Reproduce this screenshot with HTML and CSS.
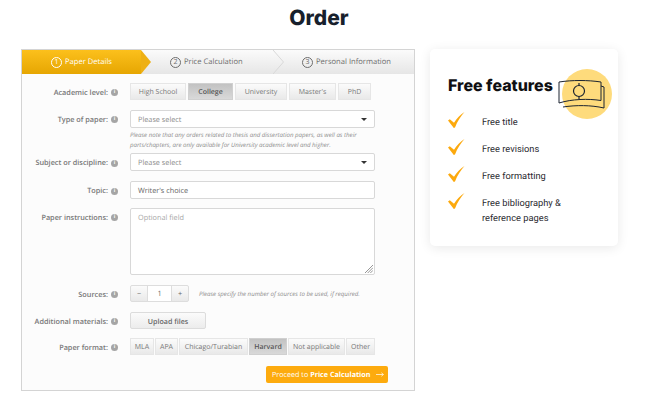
FILE: index.html
```html
<!DOCTYPE html>
<html lang="en">
<head>
<meta charset="utf-8">
<title>Order</title>
<link rel="stylesheet" href="styles.css">
</head>
<body>
<h1 class="title">Order</h1>
<div class="layout">
  <main class="order">
    <div class="steps">
      <div class="step step-active"><span class="num">1</span>Paper Details</div>
      <div class="step step-two"><span class="num">2</span>Price Calculation</div>
      <div class="step step-three"><span class="num">3</span>Personal Information</div>
      <svg class="arrow arrow-one" viewBox="0 0 10 24" aria-hidden="true"><path d="M0 0L10 12L0 24Z" fill="#eeb014"/></svg>
      <svg class="arrow arrow-two" viewBox="0 0 12 24" aria-hidden="true"><path d="M0 0L10.500 12L0 24" fill="none" stroke="#d8d8d8"/></svg>
    </div>
    <div class="form">
      <div class="row">
        <div class="label">Academic level:<i class="info">i</i></div>
        <div class="tabs tabs-wide">
          <span class="tab tab-hs">High School</span><span class="tab tab-college on">College</span><span class="tab tab-uni">University</span><span class="tab tab-master">Master's</span><span class="tab tab-phd">PhD</span>
        </div>
      </div>
      <div class="row row-select">
        <div class="label">Type of paper:<i class="info">i</i></div>
        <div class="control">
          <div class="field select">Please select<b class="caret"></b></div>
          <p class="note">Please note that any orders related to thesis and dissertation papers, as well as their<br>parts/chapters, are only available for University academic level and higher.</p>
        </div>
      </div>
      <div class="row">
        <div class="label">Subject or discipline:<i class="info">i</i></div>
        <div class="field select">Please select<b class="caret"></b></div>
      </div>
      <div class="row row-topic">
        <div class="label">Topic:<i class="info">i</i></div>
        <div class="field value">Writer's choice</div>
      </div>
      <div class="row row-top">
        <div class="label">Paper instructions:<i class="info">i</i></div>
        <div class="field area">Optional field
          <svg class="grip" viewBox="0 0 9 9" aria-hidden="true"><path d="M0 9L9 0M3 9L9 3M6 9L9 6" stroke="#888" fill="none"/></svg>
        </div>
      </div>
      <div class="row">
        <div class="label">Sources:<i class="info">i</i></div>
        <div class="stepper"><span class="minus">−</span><span class="count">1</span><span class="plus">+</span></div>
        <p class="note note-inline">Please specify the number of sources to be used, if required.</p>
      </div>
      <div class="row row-upload">
        <div class="label">Additional materials:<i class="info">i</i></div>
        <div class="upload">Upload files</div>
      </div>
      <div class="row row-format">
        <div class="label">Paper format:<i class="info">i</i></div>
        <div class="tabs">
          <span class="tab tab-mla">MLA</span><span class="tab tab-apa">APA</span><span class="tab tab-chi">Chicago/Turabian</span><span class="tab tab-har on">Harvard</span><span class="tab tab-na">Not applicable</span><span class="tab tab-oth">Other</span>
        </div>
      </div>
      <div class="actions">
        <div class="proceed">Proceed to&nbsp;<strong>Price Calculation</strong><svg class="long-arrow" viewBox="0 0 9 5" aria-hidden="true"><path d="M0 2.500H8M6 .5L8.500 2.500L6 4.500" fill="none" stroke="#fff" stroke-width=".8"/></svg></div>
      </div>
    </div>
  </main>
  <aside class="card">
    <div class="card-head">
      <h2>Free features</h2>
      <svg class="money" viewBox="0 0 56 52" aria-hidden="true">
        <circle cx="30" cy="25" r="25" fill="#fedb7c"/>
        <path d="M2 13C15 11 31 11 44 13L44 31.500C31 29.500 15 30 2 34Z" fill="none" stroke="#1c2430" stroke-width="1"/>
        <path d="M6 38C19 36 34 36 47 39L47 18L44 17" fill="none" stroke="#1c2430" stroke-width="1"/>
        <circle cx="22" cy="22" r="5.500" fill="none" stroke="#1c2430" stroke-width="1.200"/>
        <path d="M22 14V16.500M22 27.500V30" stroke="#1c2430" stroke-width="1.200"/>
      </svg>
    </div>
    <ul class="features">
      <li><svg class="check" viewBox="0 0 17 16" aria-hidden="true"><path d="M0 8.500L1.800 7.300L6 10.800C9 6 12 3 16.500 0C13 4 9.200 9.500 7 15.500L5.800 16Z" fill="#fca90d"/></svg><span>Free title</span></li>
      <li><svg class="check" viewBox="0 0 17 16" aria-hidden="true"><path d="M0 8.500L1.800 7.300L6 10.800C9 6 12 3 16.500 0C13 4 9.200 9.500 7 15.500L5.800 16Z" fill="#fca90d"/></svg><span>Free revisions</span></li>
      <li><svg class="check" viewBox="0 0 17 16" aria-hidden="true"><path d="M0 8.500L1.800 7.300L6 10.800C9 6 12 3 16.500 0C13 4 9.200 9.500 7 15.500L5.800 16Z" fill="#fca90d"/></svg><span>Free formatting</span></li>
      <li><svg class="check" viewBox="0 0 17 16" aria-hidden="true"><path d="M0 8.500L1.800 7.300L6 10.800C9 6 12 3 16.500 0C13 4 9.200 9.500 7 15.500L5.800 16Z" fill="#fca90d"/></svg><span>Free bibliography &amp;<br>reference pages</span></li>
    </ul>
  </aside>
</div>
</body>
</html>
```
FILE: styles.css
```css
* { box-sizing: border-box; }
html, body { margin: 0; padding: 0; }
body {
  width: 650px;
  height: 415px;
  overflow: hidden;
  background: #fff;
  font-family: "Open Sans", sans-serif;
  text-rendering: geometricPrecision;
  color: #666;
}
.title {
  margin: 0;
  padding-top: 5px;
  height: 49px;
  width: 638px;
  text-align: center;
  font-family: Inter, sans-serif;
  font-weight: 800;
  font-size: 21px;
  line-height: 27px;
  color: #17202c;
}
.layout {
  display: flex;
  align-items: flex-start;
  padding-left: 21px;
  gap: 15px;
}
.order {
  width: 394px;
  height: 342px;
  border: 1px solid #d4d4d4;
  border-top: 0;
  background: #fcfcfc;
}
.steps {
  position: relative;
  display: flex;
  height: 25px;
  background: linear-gradient(#fbfbfb, #e6e6e6);
  border-top: 1px solid #d4d4d4;
  font-size: 7.600px;
  color: #6d6d6d;
  white-space: nowrap;
}
.step {
  display: flex;
  align-items: center;
  height: 24px;
}
.step-active {
  width: 119px;
  padding-left: 29px;
  color: #fff;
  background: linear-gradient(#fcc01c, #e6a602);
}
.step-two { width: 132px; padding-left: 29px; }
.step-three { padding-left: 29px; }
.num {
  display: inline-flex;
  align-items: center;
  justify-content: center;
  width: 11px;
  height: 11px;
  margin-right: 3px;
  border: 1px solid currentColor;
  border-radius: 50%;
  font-size: 7px;
  line-height: 1;
}
.arrow {
  position: absolute;
  top: 0;
  height: 24px;
}
.arrow-one { left: 119px; width: 10px; }
.arrow-two { left: 251px; width: 12px; }
.form {
  padding-top: 9px;
}
.row {
  display: flex;
  align-items: center;
  min-height: 17px;
  margin-bottom: 10px;
}
.row-select { align-items: flex-start; margin-bottom: 4px; }
.row-topic { margin-bottom: 9px; }
.row-top { align-items: flex-start; }
.row-upload { margin-bottom: 9px; }
.row-format { margin-bottom: 11px; }
.label {
  flex: none;
  display: flex;
  align-items: center;
  justify-content: flex-end;
  width: 96px;
  height: 17px;
  padding-top: 2px;
  margin-right: 12px;
  font-size: 7.300px;
  font-weight: 600;
  color: #777;
  white-space: nowrap;
}
.info {
  display: inline-flex;
  align-items: center;
  justify-content: center;
  flex: none;
  width: 7px;
  height: 7px;
  margin-left: 3px;
  border-radius: 50%;
  background: #a5a5a5;
  color: #fff;
  font: normal 700 5px/1 "Open Sans", sans-serif;
}
.tabs { display: flex; gap: 1px; }
.tabs-wide { gap: 2px; }
.tab {
  display: flex;
  align-items: center;
  justify-content: center;
  height: 17px;
  padding-top: 2px;
  border: 1px solid #e6e6e6;
  background: linear-gradient(#fbfbfb, #e9e9e9);
  font-size: 7px;
  color: #777;
  white-space: nowrap;
}
.tab.on {
  background: linear-gradient(#c2c2c2, #d9d9d9);
  font-weight: 600;
  color: #555;
  border-color: #d0d0d0;
}
.tab-hs { width: 56px; }
.tab-college { width: 45px; }
.tab-uni { width: 52px; }
.tab-master { width: 47px; }
.tab-phd { width: 33px; }
.tab-mla { width: 24px; }
.tab-apa { width: 23px; }
.tab-chi { width: 69px; }
.tab-har { width: 38px; }
.tab-na { width: 57px; }
.tab-oth { width: 29px; }
.control { width: 245px; }
.field {
  position: relative;
  display: flex;
  align-items: center;
  width: 245px;
  height: 18px;
  padding: 2px 0 0 7px;
  background: #fff;
  border: 1px solid #d8d8d8;
  border-radius: 2px;
  font-size: 7.300px;
  color: #8b8b8b;
}
.value { color: #666; }
.area {
  align-items: flex-start;
  height: 67px;
  padding-top: 4px;
  color: #a8a8a8;
}
.grip {
  position: absolute;
  right: 1px;
  bottom: 1px;
  width: 8px;
  height: 8px;
}
.caret {
  position: absolute;
  right: 7px;
  top: 7px;
  border-style: solid;
  border-width: 3px 3px 0;
  border-color: #333 transparent transparent;
}
.note {
  margin: 2px 0 0;
  font-size: 6.100px;
  line-height: 9.500px;
  font-style: italic;
  color: #8a8a8a;
  white-space: nowrap;
}
.note-inline { margin: 1px 0 0 10px; }
.stepper {
  display: flex;
  width: 59px;
  height: 17px;
  font-size: 7.300px;
  color: #666;
  border: 1px solid #ddd;
  border-radius: 2px;
  background: linear-gradient(#fbfbfb, #e9e9e9);
}
.stepper span {
  display: flex;
  align-items: center;
  justify-content: center;
  width: 16px;
  padding-top: 1px;
}
.stepper .count {
  width: 25px;
  background: #fff;
  border-left: 1px solid #ddd;
  border-right: 1px solid #ddd;
}
.upload {
  display: flex;
  align-items: center;
  justify-content: center;
  width: 76px;
  height: 17px;
  padding-top: 2px;
  border: 1px solid #dcdcdc;
  border-radius: 2px;
  background: linear-gradient(#fbfbfb, #ececec);
  font-size: 7.100px;
  font-weight: 600;
  color: #666;
}
.actions {
  display: flex;
  justify-content: flex-end;
  padding-right: 26px;
}
.proceed {
  display: flex;
  align-items: center;
  width: 122px;
  height: 17px;
  padding-left: 6px;
  border-radius: 2px;
  background: #fdab0e;
  color: #fff;
  font-size: 7.200px;
  white-space: nowrap;
}
.proceed strong { font-weight: 700; }
.long-arrow { width: 8px; height: 5px; margin-left: 6px; }
.card {
  width: 188px;
  height: 197px;
  padding: 19px 0 0 18px;
  background: #fff;
  border-radius: 5px;
  box-shadow: 0 2px 12px rgba(0, 0, 0, .09);
}
.card-head {
  display: flex;
  align-items: flex-start;
  height: 47px;
}
.card-head h2 {
  margin: 8px 0 0;
  width: 109px;
  font-family: Inter, sans-serif;
  font-weight: 800;
  font-size: 16px;
  line-height: 18px;
  color: #0f0f12;
  white-space: nowrap;
}
.money { width: 56px; height: 52px; flex: none; margin-top: 1px; }
.features {
  list-style: none;
  margin: 0;
  padding: 0;
  font-family: Roboto, sans-serif;
  font-size: 9.300px;
  line-height: 15px;
  color: #2a2a30;
}
.features li {
  display: flex;
  align-items: flex-start;
  margin-bottom: 12px;
}
.check { width: 17px; height: 16px; flex: none; margin: -3px 17px 0 0; }
```
